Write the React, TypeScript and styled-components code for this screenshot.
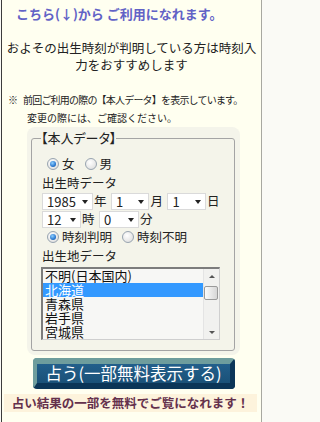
import React from "react";
import styled, { createGlobalStyle } from "styled-components";

const Global = createGlobalStyle`
  html, body { margin: 0; padding: 0; background: #fafaf5; }
  body {
    font-family: "Noto Sans CJK JP", "Noto Sans", sans-serif;
    color: #222;
  }
  * { box-sizing: border-box; }
`;

const Page = styled.div`
  margin-left: 1px;
  width: 261px;
  min-height: 422px;
  border-left: 1px solid #3c3c3c;
  border-right: 1px solid #a8a8a0;
  background: #fffff0;
  display: flex;
  flex-direction: column;
  align-items: flex-start;
`;

const Title = styled.div`
  padding: 5px 0 0 14px;
  font-size: 13px;
  font-weight: bold;
  line-height: 18px;
  color: #6262c6;
  white-space: nowrap;
`;

const Lead = styled.p`
  margin: 16px 0 0;
  width: 100%;
  text-align: center;
  font-size: 12.5px;
  line-height: 17px;
`;

const Note = styled.div<{ $indent: number; $top?: number; $tight?: boolean }>`
  margin-top: ${(p) => p.$top ?? 0}px;
  padding-left: ${(p) => p.$indent}px;
  font-size: 10px;
  line-height: 18px;
  letter-spacing: ${(p) => (p.$tight ? "-0.8px" : "0")};
  white-space: nowrap;
`;

const Mark = styled.span`
  margin-right: 5px;
  letter-spacing: 0;
`;

const FieldWrap = styled.div`
  margin-left: 25px;
  width: 213px;
  padding: 3px 5px 4px 4px;
  background: #f4f4ea;
  border-radius: 8px;
`;

const Fieldset = styled.fieldset`
  margin: 0;
  min-width: 0;
  padding: 9px 10px 10px 10px;
  border: 1px solid #a4a4a4;
  border-radius: 3px;
`;

const Legend = styled.legend`
  padding: 0;
  margin-left: -1px;
  font-size: 13px;
  line-height: 16px;
  font-feature-settings: "palt";
`;

const RadioRow = styled.div<{ $top?: number }>`
  display: flex;
  align-items: center;
  height: 18px;
  margin-top: ${(p) => p.$top ?? 0}px;
  padding-left: 5px;
  gap: 10px;
`;

const Choice = styled.label`
  display: inline-flex;
  align-items: center;
  gap: 3px;
  font-size: 12.5px;
  line-height: 18px;
`;

const Radio = styled.input.attrs({ type: "radio" })`
  appearance: none;
  margin: 0;
  width: 12px;
  height: 12px;
  border-radius: 50%;
  border: 1px solid #98a4b0;
  background: radial-gradient(circle at 40% 35%, #ffffff 0%, #e4e4e4 70%, #d0d0d0 100%);
  display: inline-grid;
  place-items: center;
  &:checked::after {
    content: "";
    width: 6px;
    height: 6px;
    border-radius: 50%;
    background: radial-gradient(circle at 40% 35%, #8fd0ff 0%, #2a78d0 60%, #14508e 100%);
  }
`;

const FieldLabel = styled.div`
  font-size: 12.5px;
  line-height: 19px;
`;

const SelectRow = styled.div`
  display: flex;
  align-items: center;
  height: 18px;
`;

const SelectBox = styled.div<{ $w: number }>`
  position: relative;
  display: flex;
  align-items: center;
  width: ${(p) => p.$w}px;
  height: 17px;
  padding-left: 4px;
  border: 1px solid #dadada;
  background: #fff;
  font-size: 13px;
  line-height: 15px;
  color: #222;
  cursor: default;
  &::after {
    content: "";
    position: absolute;
    right: 4px;
    top: 6px;
    border-left: 3.5px solid transparent;
    border-right: 3.5px solid transparent;
    border-top: 4px solid #222;
  }
`;

const Unit = styled.span`
  margin: 0 4.5px 0 1px;
  font-size: 12.5px;
  line-height: 18px;
`;

const ListBox = styled.div`
  display: flex;
  margin: 2px 0 0 -1px;
  width: 179px;
  height: 73px;
  border-top: 2px solid #7c7c7c;
  border-left: 2px solid #7c7c7c;
  border-right: 1px solid #cfcfcf;
  border-bottom: 1px solid #cfcfcf;
  background: #f7f7f5;
`;

const Items = styled.div`
  flex: 1;
  overflow: hidden;
`;

const Item = styled.div<{ $sel?: boolean }>`
  height: 14px;
  padding-left: 2px;
  font-size: 13px;
  line-height: 14px;
  white-space: nowrap;
  background: ${(p) => (p.$sel ? "#3399ff" : "transparent")};
  color: ${(p) => (p.$sel ? "#fff" : "#111")};
`;

const Scrollbar = styled.div`
  width: 16px;
  display: flex;
  flex-direction: column;
  background: #f1f1ef;
  border-left: 1px solid #e4e4e4;
`;

const Arrow = styled.div<{ $down?: boolean }>`
  height: 14px;
  display: grid;
  place-items: center;
  &::before {
    content: "";
    border-left: 3.5px solid transparent;
    border-right: 3.5px solid transparent;
    ${(p) =>
      p.$down ? "border-top: 3px solid #555;" : "border-bottom: 3px solid #555;"}
  }
`;

const Thumb = styled.div`
  margin: 3px 1px 0 0;
  height: 14px;
  border: 1px solid #9a9a9a;
  border-radius: 2px;
  background: linear-gradient(to right, #fcfcfc, #d6d6d6);
`;

const Spacer = styled.div`
  flex: 1;
`;

const Submit = styled.button`
  margin: 3px 0 0 31px;
  width: 202px;
  height: 31px;
  padding: 0;
  border-style: solid;
  border-width: 6px 5px 6px 4px;
  border-color: #6e9d9d #0b3557 #0b3557 #6e9d9d;
  border-radius: 4px;
  background: linear-gradient(#235f8b, #1a5178);
  color: #fff;
  font-family: inherit;
  font-size: 16.5px;
  line-height: 19px;
  text-align: center;
  white-space: nowrap;
  cursor: pointer;
`;

const Banner = styled.div`
  margin: 5px 0 0 2px;
  width: 253px;
  height: 18px;
  background: #fdf3dc;
  color: #64304c;
  font-size: 12.5px;
  font-weight: bold;
  line-height: 18px;
  text-align: center;
  white-space: nowrap;
`;

const prefs = ["不明(日本国内)", "北海道", "青森県", "岩手県", "宮城県", "秋田県"];

export default function App() {
  return (
    <>
      <Global />
      <Page>
        <Title>こちら(↓)から ご利用になれます。</Title>
        <Lead>
          およその出生時刻が判明している方は時刻入
          <br />
          力をおすすめします
        </Lead>
        <Note $indent={6} $top={18} $tight>
          <Mark>※</Mark>前回ご利用の際の【本人データ】を表示しています。
        </Note>
        <Note $indent={25}>変更の際には、ご確認ください。</Note>
        <FieldWrap>
          <Fieldset>
            <Legend>【本人データ】</Legend>
            <RadioRow>
              <Choice>
                <Radio name="sex" defaultChecked />
                女
              </Choice>
              <Choice>
                <Radio name="sex" />
                男
              </Choice>
            </RadioRow>
            <FieldLabel>出生時データ</FieldLabel>
            <SelectRow>
              <SelectBox $w={53}>1985</SelectBox>
              <Unit>年</Unit>
              <SelectBox $w={40}>1</SelectBox>
              <Unit>月</Unit>
              <SelectBox $w={40}>1</SelectBox>
              <Unit>日</Unit>
            </SelectRow>
            <SelectRow>
              <SelectBox $w={39}>12</SelectBox>
              <Unit>時</Unit>
              <SelectBox $w={40}>0</SelectBox>
              <Unit>分</Unit>
            </SelectRow>
            <RadioRow>
              <Choice>
                <Radio name="time" defaultChecked />
                時刻判明
              </Choice>
              <Choice>
                <Radio name="time" />
                時刻不明
              </Choice>
            </RadioRow>
            <FieldLabel>出生地データ</FieldLabel>
            <ListBox>
              <Items>
                {prefs.map((p, i) => (
                  <Item key={p} $sel={i === 1}>
                    {p}
                  </Item>
                ))}
              </Items>
              <Scrollbar>
                <Arrow />
                <Thumb />
                <Spacer />
                <Arrow $down />
              </Scrollbar>
            </ListBox>
          </Fieldset>
        </FieldWrap>
        <Submit type="button">占う(一部無料表示する)</Submit>
        <Banner>占い結果の一部を無料でご覧になれます！</Banner>
      </Page>
    </>
  );
}
